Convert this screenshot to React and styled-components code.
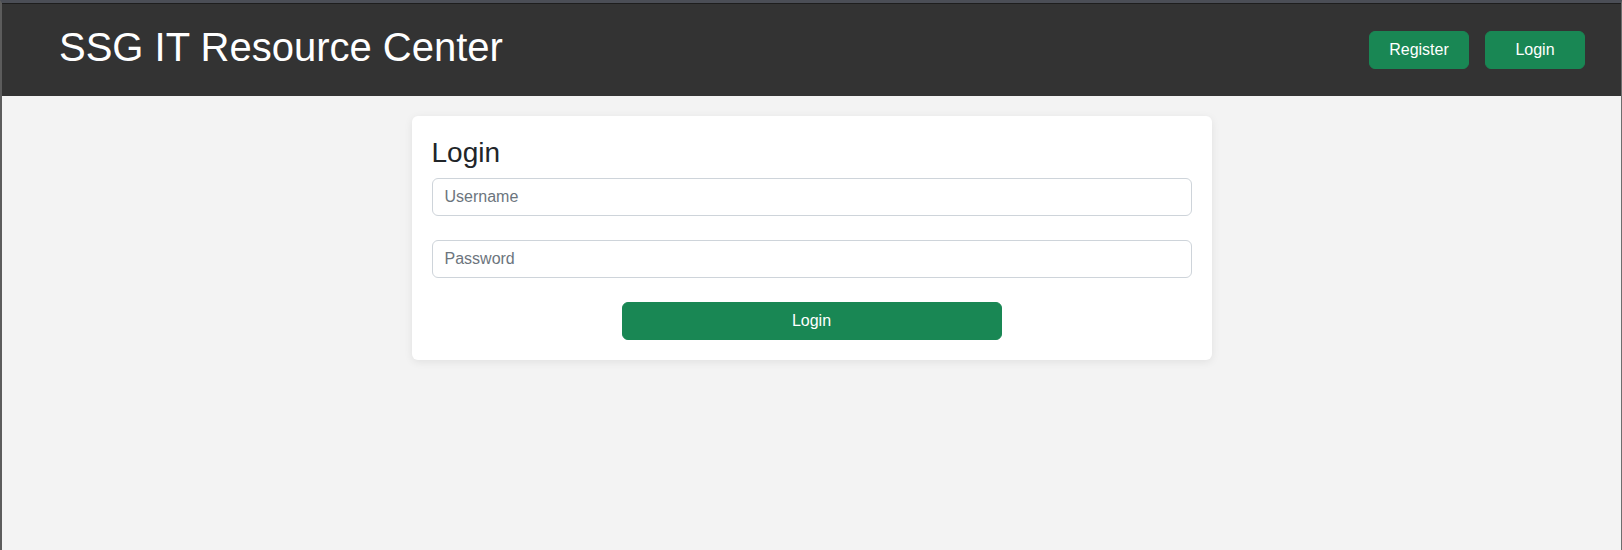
import React from 'react';
import styled, { createGlobalStyle } from 'styled-components';

const GlobalStyle = createGlobalStyle`
  * {
    box-sizing: border-box;
  }

  body {
    margin: 0;
    font-family: "Liberation Sans", Arial, sans-serif;
    background-color: #f3f3f3;
  }
`;

const Frame = styled.div`
  min-height: 550px;
  border-top: 3px solid #4b4e56;
  border-left: 2px solid #5c5c5c;
  border-right: 1px solid #6e6e6e;
  background-color: #f3f3f3;
`;

const Header = styled.header`
  display: flex;
  align-items: center;
  justify-content: space-between;
  height: 93px;
  padding: 0 36px 0 57px;
  border-top: 1px solid #1e1e1e;
  background-color: #333333;
`;

const Title = styled.h1`
  margin: 0 0 6px 0;
  font-size: 40px;
  font-weight: 400;
  line-height: 1.2;
  color: #ffffff;
`;

const Nav = styled.nav`
  display: flex;
  gap: 16px;
`;

const Button = styled.button`
  width: ${(props) => props.$width || '100px'};
  height: 38px;
  padding: 0 12px;
  border: 1px solid #198754;
  border-radius: 6px;
  background-color: #198754;
  color: #ffffff;
  font-family: inherit;
  font-size: 16px;
  line-height: 1.5;
  cursor: pointer;

  &:hover {
    background-color: #157347;
  }
`;

const Main = styled.main`
  display: flex;
  justify-content: center;
  padding-top: 20px;
`;

const Card = styled.form`
  display: flex;
  flex-direction: column;
  width: 800px;
  padding: 20px;
  border-radius: 6px;
  background-color: #ffffff;
  box-shadow: 0px 2px 8px rgba(0, 0, 0, 0.08);
`;

const CardTitle = styled.h3`
  margin: 0 0 8px 0;
  font-size: 28px;
  font-weight: 400;
  line-height: 1.2;
  color: #212529;
`;

const Input = styled.input`
  display: block;
  width: 100%;
  height: 38px;
  margin-bottom: 24px;
  padding: 6px 12px;
  border: 1px solid #ced4da;
  border-radius: 6px;
  font-family: inherit;
  font-size: 16px;
  color: #212529;
  outline: none;

  &::placeholder {
    color: #6c757d;
  }
`;

const SubmitRow = styled.div`
  display: flex;
  justify-content: center;
`;

const App = () => {
  return (
    <>
      <GlobalStyle />
      <Frame>
        <Header>
          <Title>SSG IT Resource Center</Title>
          <Nav>
            <Button type="button">Register</Button>
            <Button type="button">Login</Button>
          </Nav>
        </Header>
        <Main>
          <Card onSubmit={(e) => e.preventDefault()}>
            <CardTitle>Login</CardTitle>
            <Input type="text" placeholder="Username" />
            <Input type="password" placeholder="Password" />
            <SubmitRow>
              <Button type="submit" $width="380px">Login</Button>
            </SubmitRow>
          </Card>
        </Main>
      </Frame>
    </>
  );
};

export default App;
